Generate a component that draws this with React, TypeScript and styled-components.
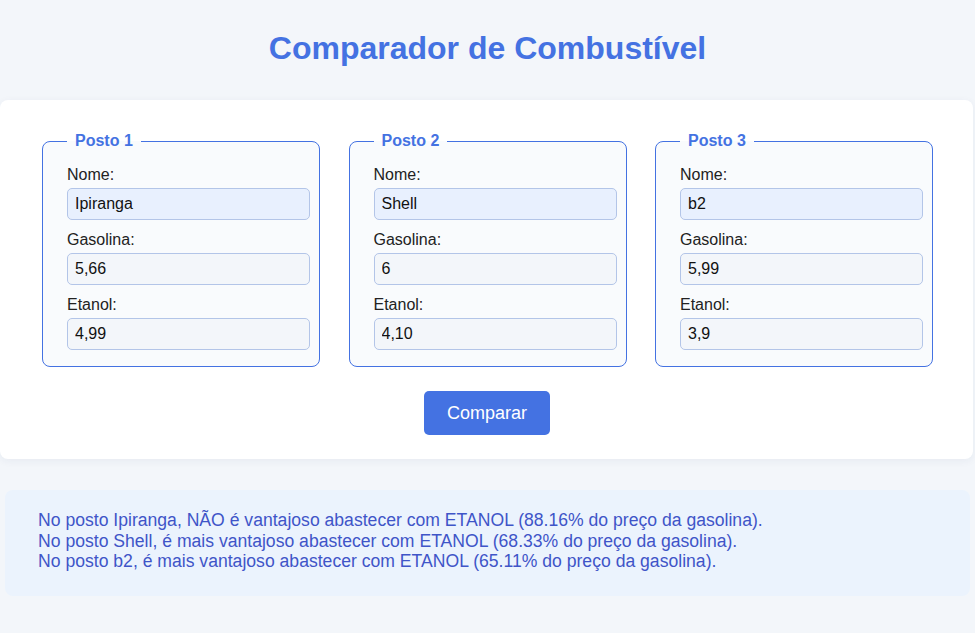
import React from "react";
import styled, { createGlobalStyle } from "styled-components";

const Global = createGlobalStyle`
  html, body { margin: 0; padding: 0; }
  body {
    background: #f3f6fa;
    font-family: "Liberation Sans", Arial, sans-serif;
    color: #222;
  }
`;

const Page = styled.div`
  display: flex;
  flex-direction: column;
`;

const Title = styled.h1`
  margin: 30px 0 33px;
  text-align: center;
  font-size: 32px;
  font-weight: 700;
  color: #4472e2;
  line-height: 37px;
`;

const Card = styled.div`
  width: 973px;
  box-sizing: border-box;
  background: #fff;
  border-radius: 8px;
  box-shadow: 0 2px 8px rgba(30, 50, 100, 0.06);
  padding: 32px 41px 24px 42px;
  display: flex;
  flex-direction: column;
  align-items: center;
`;

const Grid = styled.div`
  display: grid;
  grid-template-columns: repeat(3, 278px);
  column-gap: 28.5px;
  width: 100%;
`;

const Fieldset = styled.fieldset`
  margin: 0;
  min-width: 0;
  border: 1px solid #4472e2;
  border-radius: 8px;
  background: #f9fbfd;
  padding: 16px 9px 16px 24px;
  display: flex;
  flex-direction: column;
`;

const Legend = styled.legend`
  padding: 0 8px;
  font-size: 16px;
  font-weight: 700;
  color: #4472e2;
  line-height: 18px;
`;

const Label = styled.label<{ $first?: boolean }>`
  display: block;
  font-size: 16px;
  line-height: 18px;
  margin: ${(p) => (p.$first ? "0" : "11px")} 0 4px;
  color: #222;
`;

const Input = styled.input<{ $name?: boolean }>`
  box-sizing: border-box;
  width: 100%;
  height: 32px;
  padding: 0 7px;
  border: 1px solid #b3c5e8;
  border-radius: 5px;
  background: ${(p) => (p.$name ? "#e8f0fe" : "#f3f6fa")};
  font-family: "Liberation Sans", Arial, sans-serif;
  font-size: 16px;
  color: #111;
  outline: none;
`;

const Button = styled.button`
  margin-top: 24px;
  width: 126px;
  height: 44px;
  border: none;
  border-radius: 5px;
  background: #4472e2;
  color: #fff;
  font-family: "Liberation Sans", Arial, sans-serif;
  font-size: 18px;
  cursor: pointer;
`;

const Results = styled.div`
  margin: 31px 5px 0;
  background: #ebf3fd;
  border-radius: 8px;
  padding: 20px 33px 24px;
  color: #3f55c8;
  font-size: 17.6px;
  line-height: 20.5px;
`;

const ResultLine = styled.div``;

const postos = [
  { n: 1, nome: "Ipiranga", gas: "5,66", eta: "4,99" },
  { n: 2, nome: "Shell", gas: "6", eta: "4,10" },
  { n: 3, nome: "b2", gas: "5,99", eta: "3,9" },
];

const results = [
  "No posto Ipiranga, NÃO é vantajoso abastecer com ETANOL (88.16% do preço da gasolina).",
  "No posto Shell, é mais vantajoso abastecer com ETANOL (68.33% do preço da gasolina).",
  "No posto b2, é mais vantajoso abastecer com ETANOL (65.11% do preço da gasolina).",
];

export default function App() {
  return (
    <Page>
      <Global />
      <Title>Comparador de Combustível</Title>
      <Card>
        <Grid>
          {postos.map((p) => (
            <Fieldset key={p.n}>
              <Legend>Posto {p.n}</Legend>
              <Label $first>Nome:</Label>
              <Input $name defaultValue={p.nome} />
              <Label>Gasolina:</Label>
              <Input defaultValue={p.gas} />
              <Label>Etanol:</Label>
              <Input defaultValue={p.eta} />
            </Fieldset>
          ))}
        </Grid>
        <Button>Comparar</Button>
      </Card>
      <Results>
        {results.map((r) => (
          <ResultLine key={r}>{r}</ResultLine>
        ))}
      </Results>
    </Page>
  );
}
